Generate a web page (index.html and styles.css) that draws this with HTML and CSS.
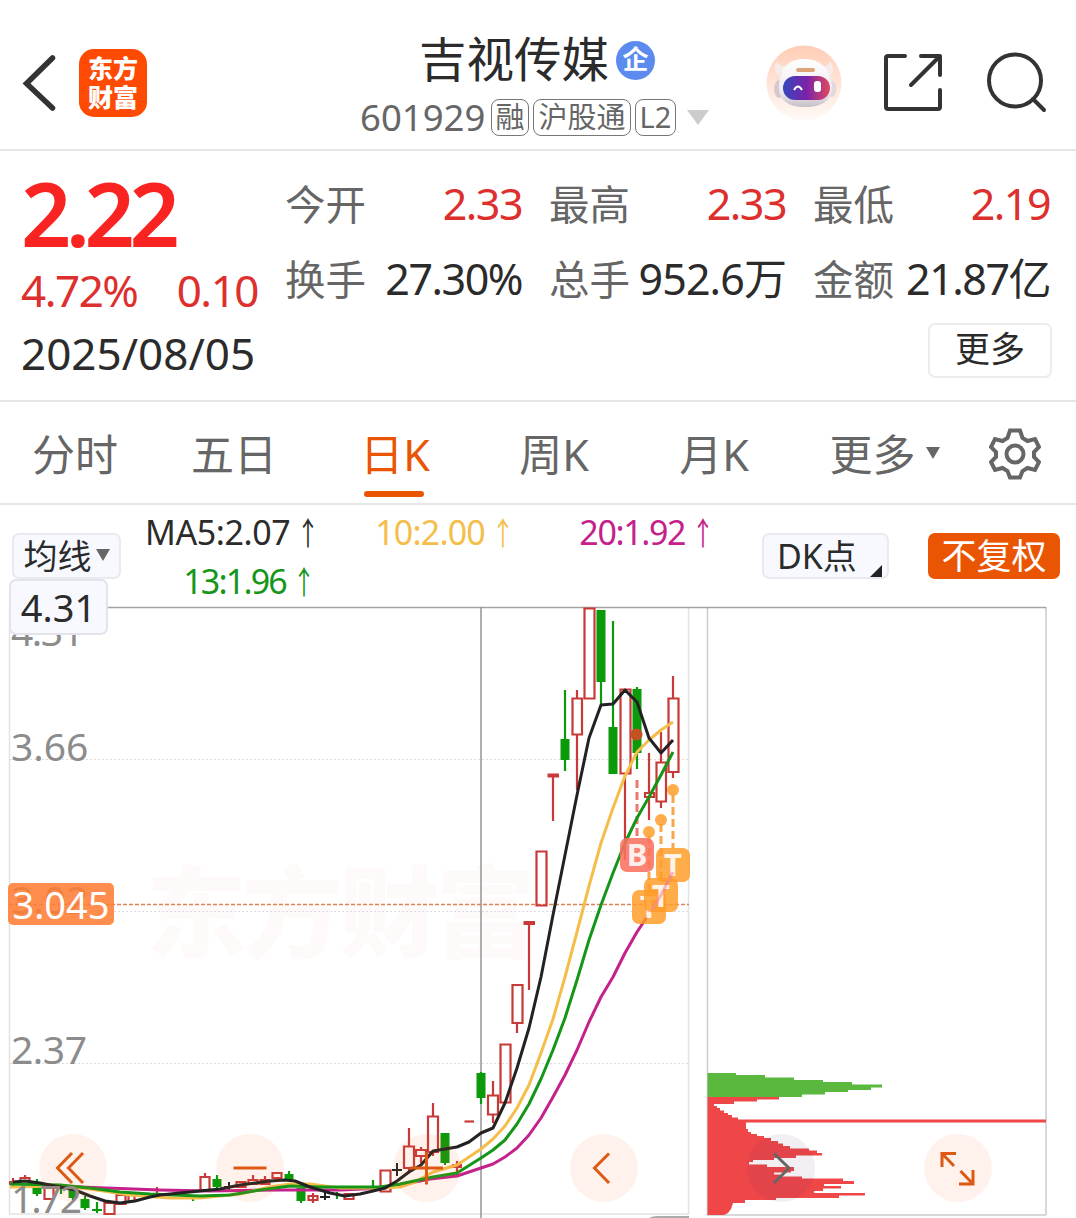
FILE: index.html
```html
<!DOCTYPE html>
<html lang="zh-CN">
<head>
    <meta charset="UTF-8">
    <meta name="viewport" content="width=device-width, initial-scale=1.0">
    <title>吉视传媒 601929</title>
    <link rel="stylesheet" href="styles.css">
</head>
<body>
    <header class="topbar">
        <div class="topbar-left">
            <svg class="back" width="36" height="60" viewBox="0 0 36 60"><path d="M32.500 5 6.500 30.500 32.500 55" fill="none" stroke="#333" stroke-width="5.500" stroke-linecap="round"/></svg>
            <div class="logo"><span>东方</span><span>财富</span></div>
        </div>
        <div class="stock">
            <div class="stock-name"><h1>吉视传媒</h1><span class="corp">企</span></div>
            <div class="stock-code">
                <span class="code">601929</span>
                <span class="tag tag-r">融</span>
                <span class="tag tag-h">沪股通</span>
                <span class="tag tag-l">L2</span>
                <i class="caret"></i>
            </div>
        </div>
        <div class="topbar-right">
            <svg width="76" height="76" viewBox="0 0 76 76">
                <defs>
                    <linearGradient id="peach" x2="0" y2="1"><stop offset="0" stop-color="#ffcdb5"/><stop offset="1" stop-color="#fffaf8"/></linearGradient>
                    <linearGradient id="visor"><stop offset="0" stop-color="#3448bd"/><stop offset=".5" stop-color="#7b22a8"/><stop offset="1" stop-color="#e04a60"/></linearGradient>
                    <linearGradient id="helmet" x2="0" y2="1"><stop offset="0" stop-color="#fff"/><stop offset=".7" stop-color="#eeeaf0"/><stop offset="1" stop-color="#c5bfc6"/></linearGradient>
                </defs>
                <circle cx="38" cy="38" r="37.500" fill="url(#peach)"/>
                <path d="M11 16q-5 8 1 15l10-9q-10-1-11-6zM64 16q6 8 1 15l-10-9q9-1 9-6z" fill="#f5ebe9"/>
                <ellipse cx="13" cy="44" rx="5" ry="9" fill="#d6c9cd"/>
                <ellipse cx="66" cy="44" rx="4.500" ry="8" fill="#e2d8de"/>
                <path d="M13 41C14 23 22 14 38 14s26 9 28 27c0 14-9 21-27 21s-26-7-26-21z" fill="url(#helmet)"/>
                <rect x="30" y="23" width="19" height="4" rx="2" fill="#dda477"/>
                <rect x="17" y="31" width="47" height="24" rx="12" fill="url(#visor)"/>
                <path d="M28 45q4-7 8 0" fill="none" stroke="#fff" stroke-width="2"/>
                <rect x="48" y="36" width="7" height="11" rx="3" fill="#fff"/>
            </svg>
            <svg width="60" height="60" viewBox="0 0 60 60" fill="none" stroke="#333" stroke-width="4" stroke-linecap="round" stroke-linejoin="round"><path d="M22 3H5Q3 3 3 5v49q0 2 2 2h50q2 0 2-2V37M38 3h19v19M56 4 28 32"/></svg>
            <svg width="64" height="62" viewBox="-2 0 64 62" fill="none" stroke="#333" stroke-width="4" stroke-linecap="round"><circle cx="29" cy="28.500" r="26"/><path d="m47 47 11 11"/></svg>
        </div>
    </header>

    <section class="quote">
        <div class="price-box">
            <div class="price">2.22</div>
            <div class="change"><span>4.72%</span><span>0.10</span></div>
            <div class="date">2025/08/05</div>
        </div>
        <div class="quote-right">
            <div class="stats">
                <div class="stat"><span>今开</span><b class="up">2.33</b></div>
                <div class="stat"><span>最高</span><b class="up">2.33</b></div>
                <div class="stat"><span>最低</span><b class="up">2.19</b></div>
                <div class="stat"><span>换手</span><b>27.30%</b></div>
                <div class="stat"><span>总手</span><b class="wide">952.6万</b></div>
                <div class="stat"><span>金额</span><b>21.87亿</b></div>
            </div>
            <button class="more">更多</button>
        </div>
    </section>

    <nav class="tabs">
        <a>分时</a>
        <a>五日</a>
        <a class="active">日K</a>
        <a>周K</a>
        <a>月K</a>
        <a class="tab-more">更多<i class="caret-dark"></i></a>
        <svg width="52" height="52" viewBox="0 0 52 52" fill="none" stroke="#666" stroke-width="4"><path d="M21 2.500h10l2.500 7.500 5 3 7.500-2 4 8-5 5v5l5 5-4 8-7.500-2-5 3-2.500 6.500H21L18.500 43l-5-3L6 42l-4-8 5-5v-5l-5-5 4-8 7.500 2 5-3z"/><circle cx="26" cy="26" r="8.500"/></svg>
    </nav>

    <section class="indicators">
        <button class="pill ma-btn">均线<i class="caret-dark"></i></button>
        <div class="ma-list">
            <span class="ma5">MA5:2.07<i>↑</i></span>
            <span class="ma10">10:2.00<i>↑</i></span>
            <span class="ma20">20:1.92<i>↑</i></span>
            <span class="ma13">13:1.96<i>↑</i></span>
        </div>
        <button class="pill dk">DK点<i></i></button>
        <button class="pill fq">不复权</button>
    </section>

    <main class="chart">
        <svg width="1076" height="618" viewBox="0 600 1076 618">
            <text class="watermark" x="146" y="950" textLength="390">东方财富</text>

            <!-- frame and grid -->
            <path d="M9.500 607V1214M688.500 607V1214M9 1214H689" stroke="#e3e3e3" stroke-width="1.500" fill="none"/>
            <path d="M707.500 607V1215M1046 607V1215M707 1215H1046" stroke="#ccc" stroke-width="1.500" fill="none"/>
            <path d="M9 607.500H1046" stroke="#a3a3a3" stroke-width="1.500"/>
            <path d="M10 759.500H688M10 911.500H688M10 1063.500H688" stroke="#ddd" stroke-dasharray="2 2"/>
            <path d="M649 1218Q652 1216 658 1216H689V1218Z" fill="#aaa"/>

            <!-- price axis -->
            <g class="axis">
                <text x="11" y="646" textLength="73">4.31</text>
                <text x="11" y="761">3.66</text>
                <text x="11" y="914">3.02</text>
                <text x="11" y="1064" textLength="76">2.37</text>
            </g>

            <path d="M481 607V1218" stroke="#949494" stroke-width="1.500"/>
            <path d="M9 904.500H689" stroke="#d98558" stroke-width="1.500" stroke-dasharray="4 2"/>

            <!-- falling candles -->
            <g stroke="#0a9a0a" stroke-width="2.200">
                <path d="M37 1179V1196M61 1186V1194M73 1187V1200M85 1196V1210M97 1202V1213M92 1210H102M193 1196V1201M217 1175V1190M289 1171V1180M301 1188V1203M337 1192V1199M373 1180V1188M445 1133V1165M481 1072V1104M565 690V771M601 610V707M613 621V774M637 687V769"/>
                <path stroke-width="9" d="M37 1185V1194M73 1190V1198M85 1199V1208M217 1179V1187M289 1174V1180M301 1188V1201M445 1133V1163M481 1073V1098M565 739V760M601 610V682M613 727V774M637 689V753"/>
            </g>

            <!-- rising candles -->
            <g stroke="#c73a38" stroke-width="2.200" fill="none">
                <path d="M13 1178V1186M25 1175V1178M157 1187V1193M205 1173V1177M253 1175V1180M265 1176V1180M313 1193V1203M409 1128V1146M409 1168V1172M421 1147V1150M421 1157V1163M433 1103V1116M433 1152V1156M457 1161V1175M493 1081V1095M493 1115V1123M517 1023V1033M529 922V990M553 774V821M577 690V698M577 735V790M625 775V860M649 753V793M649 797V820M661 732V762M661 802V808M673 676V698M673 772V778"/>
                <path d="M20.500 1178h9v6h-9zM44.500 1187h9v12h-9zM104.500 1203h10v11h-10zM116.500 1195h9v9h-9zM128.500 1195h6v6h-6zM200.500 1177h9v13h-9zM236.500 1182h9v5h-9zM248.500 1180h9v4h-9zM260.500 1180h9v4h-9zM272.500 1173h9v5h-9zM308.500 1196h9v4h-9zM344.500 1194h9v5h-9zM380.500 1170.500h10v21h-10zM404 1146.500h10v21.500h-10zM416 1150h10v6h-10zM428 1116.500h10v35.500h-10zM488 1095.500h10v19h-10zM500.500 1044.500h10v58h-10zM512.500 985h10v38h-10zM536.500 851.500h10v54h-10zM572.500 698.500h9.500v36h-9.500zM584.500 608.500h10v90h-10zM620.500 689.500h10v84h-10zM645 793h9v4h-9zM656.500 762.500h9.500v39h-9.500zM668.500 698.500h10v73.500h-10z"/>
                <path stroke-width="4" d="M9 1183H17M452 1166H462M523.500 923H535M547.500 775.500H559"/>
                <path d="M464.500 1121.500H474"/>
            </g>
            <path d="M229 1182V1190M224 1187H234M325 1192V1200M320 1197H330M397 1163V1176M392 1170H402" stroke="#222" stroke-width="2"/>

            <!-- signal stems -->
            <path d="M637 780V838" stroke="#ee786e" stroke-width="3" stroke-dasharray="8 4"/>
            <path d="M673 795V848M661 824V880M649 836V892" stroke="#f6a74a" stroke-width="3" stroke-dasharray="8 4"/>
            <circle cx="636.500" cy="734.500" r="6" fill="#c25223"/>

            <!-- moving averages -->
            <g fill="none" stroke-width="3" stroke-linejoin="round">
                <path stroke="#c4218b" d="M50 1186 80 1187 160 1190 210 1191 280 1190 340 1190 385 1188 430 1179 457 1176 481 1168 493 1164 505 1157 517 1148 529 1135 541 1118 553 1097 565 1075 577 1050 589 1022 601 997 613 977 625 953 637 932 649 914 661 895 673 872"/>
                <path stroke="#f5be4b" d="M10 1187 60 1186 90 1189 130 1195 170 1198 200 1198 240 1194 270 1187 290 1184 310 1184 340 1188 380 1188 400 1187 415 1182 433 1172 457 1165 481 1149 493 1139 505 1126 517 1108 529 1085 541 1053 553 1019 565 977 577 932 589 886 601 843 613 808 625 776 637 752 649 740 661 730 673 722"/>
                <path stroke="#169619" d="M10 1184 60 1185 90 1188 120 1192 150 1194 200 1196 230 1195 260 1190 290 1186 320 1187 360 1187 380 1187 400 1184 433 1177 457 1173 481 1158 493 1150 505 1140 517 1124 529 1104 541 1079 553 1050 565 1018 577 980 589 940 601 905 613 873 625 843 637 818 649 797 661 775 673 752"/>
                <path stroke="#222" d="M13 1182 25 1181 40 1183 60 1187 75 1190 90 1196 105 1201 120 1203 135 1201 150 1197 160 1195 190 1192 220 1189 240 1185 255 1183 270 1181 285 1180 295 1181 310 1187 330 1193 345 1196 360 1194 373 1191 385 1188 397 1181 409 1172 421 1165 433 1151 445 1149 457 1147 469 1142 481 1133 493 1128 505 1103 517 1068 529 1028 541 977 553 915 565 855 577 795 589 738 601 705 613 704 625 690 637 702 649 738 661 753 673 740"/>
            </g>
            <g class="axis"><text x="11" y="1213" textLength="71">1.72</text></g>

            <!-- trade marks -->
            <g fill="#ff9b26" fill-opacity=".83">
                <circle cx="673" cy="790" r="6"/><circle cx="661" cy="820" r="6"/><circle cx="649" cy="832" r="6"/>
                <rect x="632" y="890" width="34" height="34" rx="7"/>
                <text class="mark" x="649" y="918">T</text>
                <rect x="644" y="878" width="34" height="34" rx="7"/>
                <text class="mark" x="661" y="907">T</text>
                <rect x="656" y="848" width="34" height="34" rx="7"/>
                <text class="mark" x="673" y="876">T</text>
            </g>
            <path d="M652 910 661 895 673 872" stroke="#f58aa0" stroke-width="3" stroke-opacity=".6" fill="none"/>
            <rect x="620" y="838" width="34" height="34" rx="7" fill="#f9705f" fill-opacity=".87"/>
            <text class="mark" x="637" y="866">B</text>

            <!-- chip distribution -->
            <path fill="#5bb83f" d="M707.500 1073H736V1075H765V1077.500H794V1080H823V1082H852V1084.500H882V1087.500H871V1090H848V1092H825V1094.500H802V1097H707.500Z"/>
            <path fill="#ef4648" d="M707.500 1097H779V1099.500H757V1101.500H734V1104H714V1106H717V1108H720V1110.500H724V1113H728V1115H732V1117.500H738V1119.500H1046V1122.500H746V1129H748V1132H751V1134H757V1136H764V1138H771V1141H778V1143.500H783V1146H790V1148.500H809V1150.500H817V1153H822V1155.500H796V1158H774V1160H753V1162H749V1164.500H767V1167H794V1171H791V1172.500H774V1174.500H780V1176.500H802V1178.500H843V1181H854V1184H824V1186H841V1188.500H823V1191H814V1193H865V1195.500H839V1198H776V1200H745V1203H733L731 1209 728 1213 724 1215H707.500Z"/>
        </svg>

        <div class="top-price">4.31</div>
        <div class="cross-price">3.045</div>

        <div class="tools">
            <button><svg viewBox="0 0 68 68"><path d="M33 19 18.500 34 33 49M44 19 29.500 34 44 49"/></svg></button>
            <button><svg viewBox="0 0 68 68"><path d="M17.500 34H50.500"/></svg></button>
            <button><svg viewBox="0 0 68 68"><path d="M17 34H50M33.500 18V50.500"/></svg></button>
            <button><svg viewBox="0 0 68 68"><path d="M39 19.500 24.500 34 39 49"/></svg></button>
            <button class="gray"><svg viewBox="0 0 68 68"><path d="M27 19.500 42 34 27 49"/></svg></button>
            <button><svg viewBox="0 0 68 68"><path d="M18 33V19.500H32M18.500 20 30 32M49 36V50H35M48.500 49.500 36.500 37"/></svg></button>
        </div>
    </main>
</body>
</html>
```
FILE: styles.css
```css
* {
    margin: 0;
    padding: 0;
    box-sizing: border-box;
}

body {
    width: 1076px;
    height: 1218px;
    overflow: hidden;
    background: #fff;
    color: #2b2b2b;
    font-family: 'Noto Sans', 'Noto Sans CJK SC', sans-serif;
}

button {
    font-family: inherit;
    border: none;
    color: inherit;
}

i {
    font-style: normal;
}

svg {
    display: block;
}

/* Top bar */
.topbar {
    display: grid;
    grid-template-columns: 360px 406px 1fr;
    height: 151px;
    border-bottom: 2px solid #e6e6e6;
}

.topbar-left {
    display: flex;
    align-items: flex-start;
    padding: 49px 0 0 20px;
    gap: 23px;
}

.back {
    margin-top: 4px;
}

.logo {
    width: 68px;
    height: 68px;
    padding-top: 5px;
    border-radius: 15px;
    background: #ff4a03;
    color: #fff;
    font-size: 25px;
    font-weight: 900;
    line-height: 29px;
    text-align: center;
}

.logo span {
    display: block;
}

.stock-name {
    display: flex;
    align-items: center;
    height: 60px;
    margin-top: 30px;
    padding-left: 59px;
    gap: 7px;
}

.stock-name h1 {
    font-size: 47.500px;
    font-weight: 400;
    line-height: 60px;
    margin-top: -2px;
}

.corp {
    width: 39px;
    height: 39px;
    border-radius: 50%;
    background: #5b8bee;
    color: #fff;
    font-size: 26px;
    font-weight: 700;
    line-height: 37px;
    text-align: center;
}

.stock-code {
    display: flex;
    align-items: center;
    height: 54px;
    color: #666;
}

.code {
    width: 131px;
    font-size: 36.500px;
}

.tag {
    height: 37px;
    margin-right: 4px;
    border: 1.500px solid #777;
    border-radius: 8px;
    font-size: 29px;
    line-height: 34px;
    text-align: center;
}

.tag-r {
    width: 38px;
}

.tag-h {
    width: 98px;
}

.tag-l {
    width: 41px;
}

.caret {
    margin-left: 7px;
    border: 11px solid transparent;
    border-top: 15px solid #ccc;
    border-bottom: 0;
}

.topbar-right {
    display: flex;
    align-items: center;
    padding-top: 16px;
    gap: 41px;
}

/* Quote */
.quote {
    display: grid;
    grid-template-columns: 285px 1fr;
    height: 251px;
    border-bottom: 2px solid #e6e6ea;
}

.price-box {
    padding-left: 21px;
}

.price {
    height: 107px;
    padding-top: 9px;
    color: #f92421;
    font-size: 88px;
    font-weight: 600;
    line-height: 107px;
    letter-spacing: -5.500px;
}

.change {
    display: flex;
    justify-content: space-between;
    height: 65px;
    padding-right: 27px;
    color: #dd302e;
    font-size: 44px;
    line-height: 64px;
    letter-spacing: -1.500px;
}

.date {
    font-size: 44px;
    line-height: 61px;
}

.stats {
    display: grid;
    grid-template-columns: repeat(3, 238px);
    grid-template-rows: 75px 75px;
    column-gap: 26px;
    margin-top: 15px;
}

.stat {
    display: flex;
    justify-content: space-between;
    align-items: baseline;
    line-height: 75px;
    white-space: nowrap;
}

.stat span {
    color: #666;
    font-size: 40.500px;
}

.stat b {
    font-size: 43px;
    font-weight: 400;
    letter-spacing: -1.500px;
    margin-right: 1px;
}

.stat .wide {
    letter-spacing: -0.900px;
}

.stat .up {
    color: #dd302e;
}

.more {
    display: block;
    width: 124px;
    height: 55px;
    margin: 7px 24px 0 auto;
    border: 2px solid #ececf0;
    border-radius: 7px;
    background: #fff;
    font-size: 35px;
    line-height: 46px;
    padding-bottom: 3px;
}

/* Period tabs */
.tabs {
    display: grid;
    grid-template-columns: 150px 168px 154px 164px 156px 197px 52px;
    align-items: center;
    height: 103px;
    border-bottom: 2px solid #e6e6e6;
    color: #666;
    font-size: 43px;
    text-align: center;
}

.tabs a {
    position: relative;
    line-height: 100px;
    padding-top: 3px;
}

.tabs .active {
    color: #ea5504;
}

.tabs .active::after {
    content: "";
    position: absolute;
    left: 46px;
    bottom: 8px;
    width: 60px;
    height: 6px;
    border-radius: 3px;
    background: #ea5504;
}

.caret-dark {
    display: inline-block;
    border: 7px solid transparent;
    border-top: 12px solid #666;
    border-bottom: 0;
}

.tabs .tab-more {
    padding-right: 12px;
}

.tab-more .caret-dark {
    margin-left: 10px;
    vertical-align: 12px;
}

/* Indicator row */
.indicators {
    display: flex;
    align-items: flex-start;
    height: 95px;
    padding: 28px 0 0 12px;
}

.pill {
    height: 46px;
    border: 2px solid #e8eaf2;
    border-radius: 7px;
    background: #f7f9ff;
    font-size: 34px;
    line-height: 42px;
    white-space: nowrap;
}

.ma-btn {
    width: 109px;
}

.ma-btn .caret-dark {
    margin-left: 4px;
    vertical-align: 8px;
}

.ma-list {
    display: grid;
    grid-template-columns: 170px 200px 200px;
    grid-template-rows: 49px 49px;
    width: 640px;
    margin-top: -25px;
    padding-left: 24px;
    font-size: 34px;
    line-height: 49px;
    letter-spacing: -0.800px;
    text-align: right;
    white-space: nowrap;
}

.ma-list i {
    display: inline-block;
    width: 24px;
    margin-left: 6px;
    font-family: 'Noto Sans CJK SC', sans-serif;
    font-size: 32px;
    text-indent: -4px;
    line-height: 40px;
    transform: scaleX(0.700);
}

.ma-list .ma5 {
    letter-spacing: -0.400px;
    margin-right: 3px;
}

.ma10 {
    color: #f5be4b;
}

.ma-list .ma20 {
    color: #c4218b;
    letter-spacing: -1.400px;
}

.ma-list .ma13 {
    color: #169619;
    letter-spacing: -1.800px;
    margin-right: -1px;
}

.dk {
    display: flex;
    width: 127px;
    padding-left: 13px;
    margin-left: 1px;
}

.dk i {
    margin: 26px 0 0 13px;
    border-left: 12px solid transparent;
    border-bottom: 12px solid #222;
}

.fq {
    width: 132px;
    margin-left: 39px;
    border-color: #ea5504;
    background: #ea5504;
    color: #fff;
    font-size: 35px;
}

/* Chart */
.chart {
    position: relative;
    height: 618px;
}

.axis {
    fill: #8c8c8c;
    font-size: 39px;
}

.watermark {
    fill: #fffafa;
    font-size: 100px;
    font-weight: 900;
}

.mark {
    fill: #fff;
    fill-opacity: 0.9;
    font-size: 31px;
    font-weight: 700;
    text-anchor: middle;
}

.top-price {
    position: absolute;
    left: 9px;
    top: -21px;
    width: 99px;
    height: 56px;
    border: 2px solid #e2e4ea;
    border-radius: 7px;
    background: #f7f9ff;
    font-size: 38px;
    line-height: 52px;
    text-align: center;
}

.cross-price {
    position: absolute;
    left: 8px;
    top: 283px;
    width: 106px;
    height: 42px;
    border-radius: 5px;
    background: rgba(255, 125, 52, 0.870);
    color: #fff;
    font-size: 38px;
    line-height: 42px;
    text-align: center;
}

.tools {
    position: absolute;
    left: 39px;
    top: 534px;
    display: flex;
    gap: 109px;
}

.tools button {
    width: 68px;
    height: 68px;
    border-radius: 50%;
    background: rgba(250, 90, 40, 0.085);
}

.tools path {
    fill: none;
    stroke: #dc5a14;
    stroke-width: 3;
}

.tools .gray {
    background: rgba(90, 50, 90, 0.080);
}

.tools .gray path {
    stroke: #666;
}
```
